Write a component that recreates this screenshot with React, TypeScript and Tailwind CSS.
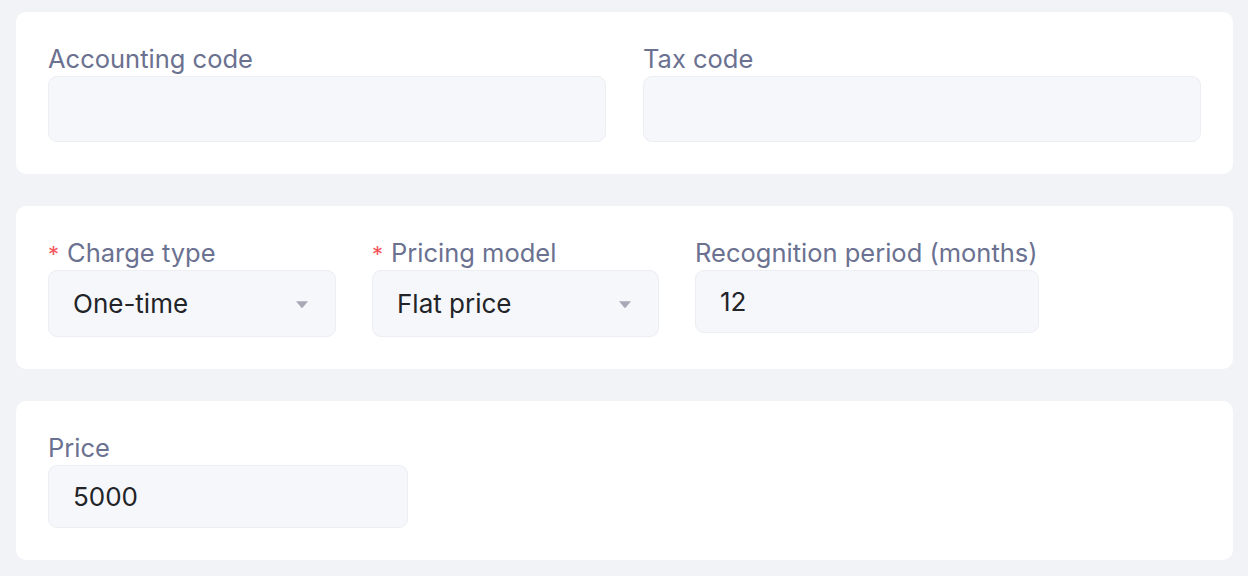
import { ReactNode } from "react";

const labelCls = "block h-[34px] text-[25.5px] leading-[34px] text-[#6b7190] whitespace-nowrap";
const boxCls =
  "flex items-center rounded-[9px] border border-[#eceef3] bg-[#f6f7fb] pl-6 pr-6 text-[26px] text-[#222428]";

function Card({ children }: { children: ReactNode }) {
  return <div className="rounded-[10px] bg-white px-8 pt-[30px] pb-8">{children}</div>;
}

function Label({ text, required }: { text: string; required?: boolean }) {
  return (
    <label className={labelCls}>
      {required && <span className="mr-[8px] text-[22px] text-[#f5565c]">*</span>}
      {text}
    </label>
  );
}

function Field({ label, value, height, required }: { label: string; value?: string; height: string; required?: boolean }) {
  return (
    <div>
      <Label text={label} required={required} />
      <div className={`${boxCls} ${height}`}>{value}</div>
    </div>
  );
}

function SelectField({ label, value, required }: { label: string; value: string; required?: boolean }) {
  return (
    <div>
      <Label text={label} required={required} />
      <div className={`${boxCls} h-[67px] justify-between pr-[26px]`}>
        <span>{value}</span>
        <svg width="14" height="9" viewBox="0 0 14 9" className="mt-[1px]">
          <path d="M1 1.2 L13 1.2 L7.8 7.6 Q7 8.4 6.2 7.6 Z" fill="#a7aab6" />
        </svg>
      </div>
    </div>
  );
}

export default function App() {
  return (
    <div
      className="flex min-h-screen flex-col gap-8 bg-[#f2f3f7] pl-4 pr-[15px] pt-3 pb-4"
      style={{ fontFamily: "Inter, 'Noto Sans', sans-serif" }}
    >
      <Card>
        <div className="grid grid-cols-2 gap-x-[37px]">
          <Field label="Accounting code" height="h-[66px]" />
          <Field label="Tax code" height="h-[66px]" />
        </div>
      </Card>

      <Card>
        <div className="flex gap-9">
          <div className="w-[288px]">
            <SelectField label="Charge type" value="One-time" required />
          </div>
          <div className="w-[287px]">
            <SelectField label="Pricing model" value="Flat price" required />
          </div>
          <div className="w-[344px]">
            <Field label="Recognition period (months)" value="12" height="h-[63px]" />
          </div>
        </div>
      </Card>

      <Card>
        <div className="w-[360px]">
          <Field label="Price" value="5000" height="h-[63px]" />
        </div>
      </Card>
    </div>
  );
}
